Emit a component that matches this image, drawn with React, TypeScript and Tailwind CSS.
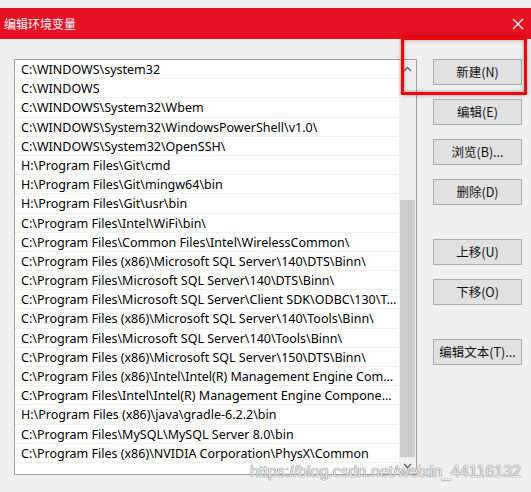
import React from 'react';

const paths = [
  'C:\\WINDOWS\\system32',
  'C:\\WINDOWS',
  'C:\\WINDOWS\\System32\\Wbem',
  'C:\\WINDOWS\\System32\\WindowsPowerShell\\v1.0\\',
  'C:\\WINDOWS\\System32\\OpenSSH\\',
  'H:\\Program Files\\Git\\cmd',
  'H:\\Program Files\\Git\\mingw64\\bin',
  'H:\\Program Files\\Git\\usr\\bin',
  'C:\\Program Files\\Intel\\WiFi\\bin\\',
  'C:\\Program Files\\Common Files\\Intel\\WirelessCommon\\',
  'C:\\Program Files (x86)\\Microsoft SQL Server\\140\\DTS\\Binn\\',
  'C:\\Program Files\\Microsoft SQL Server\\140\\DTS\\Binn\\',
  'C:\\Program Files\\Microsoft SQL Server\\Client SDK\\ODBC\\130\\Tools\\Binn\\',
  'C:\\Program Files (x86)\\Microsoft SQL Server\\140\\Tools\\Binn\\',
  'C:\\Program Files\\Microsoft SQL Server\\140\\Tools\\Binn\\',
  'C:\\Program Files (x86)\\Microsoft SQL Server\\150\\DTS\\Binn\\',
  'C:\\Program Files (x86)\\Intel\\Intel(R) Management Engine Components\\DAL',
  'C:\\Program Files\\Intel\\Intel(R) Management Engine Components\\DAL',
  'H:\\Program Files (x86)\\java\\gradle-6.2.2\\bin',
  'C:\\Program Files\\MySQL\\MySQL Server 8.0\\bin',
  'C:\\Program Files (x86)\\NVIDIA Corporation\\PhysX\\Common',
];

const buttons = [
  { label: '新建(N)', gap: 'mt-0' },
  { label: '编辑(E)', gap: 'mt-[14px]' },
  { label: '浏览(B)...', gap: 'mt-[14px]' },
  { label: '删除(D)', gap: 'mt-[14px]' },
  { label: '上移(U)', gap: 'mt-[34px]' },
  { label: '下移(O)', gap: 'mt-[14px]' },
  { label: '编辑文本(T)...', gap: 'mt-[34px]' },
];

function Chevron({ up }: { up?: boolean }) {
  return (
    <svg width="9" height="6" viewBox="0 0 9 6" className={up ? '' : 'rotate-180'}>
      <path d="M1 5 L4.5 1.5 L8 5" fill="none" stroke="#606060" strokeWidth="1.3" />
    </svg>
  );
}

export default function App() {
  return (
    <div className="relative w-[531px] h-[492px] overflow-hidden bg-[#f0f0f0] font-['Noto_Sans','Noto_Sans_CJK_SC',sans-serif] text-black">
      <div className="h-[8px]" />
      {/* title bar */}
      <div className="h-[31px] bg-[#e81123] flex items-center justify-between pl-[4px] pr-[7px] text-white">
        <span className="text-[12px] font-['Noto_Sans_CJK_SC',sans-serif]">编辑环境变量</span>
        <svg width="12" height="12" viewBox="0 0 12 12">
          <path d="M1 1 L11 11 M11 1 L1 11" stroke="white" strokeWidth="1.2" />
        </svg>
      </div>

      <div className="flex pl-[14px] pt-[20px]">
        {/* list */}
        <div className="w-[403px] h-[416px] border border-[#a0a0a0] bg-white flex">
          <div className="flex-1 min-w-0 flex flex-col">
            {paths.map((p) => (
              <div
                key={p}
                className="h-[19.2px] shrink-0 border-b border-[#f0f0f0] pl-[6px] pr-[1px] pt-[1px] text-[12.5px] leading-[18px] whitespace-nowrap overflow-hidden text-ellipsis"
              >
                {p}
              </div>
            ))}
          </div>
          <div className="w-[17px] bg-[#f0f0f0] flex flex-col">
            <div className="h-[17px] flex items-center justify-center">
              <Chevron up />
            </div>
            <div className="flex-1 flex flex-col justify-end px-[1px]">
              <div className="h-[257px] bg-[#cdcdcd]" />
            </div>
            <div className="h-[17px] flex items-center justify-center">
              <Chevron />
            </div>
          </div>
        </div>

        {/* buttons */}
        <div className="ml-[16px] flex flex-col">
          {buttons.map((b) => (
            <div
              key={b.label}
              className={`${b.gap} w-[89px] h-[26px] bg-[#e1e1e1] border border-[#adadad] flex items-center justify-center text-[12.5px] text-[#111] font-['Noto_Sans_CJK_SC',sans-serif]`}
            >
              {b.label}
            </div>
          ))}
        </div>
      </div>

      {/* red annotation box */}
      <div className="absolute left-[401px] top-[37px] w-[126px] h-[58px] border-[3px] border-[#ff0000] shadow-[0_0_4px_rgba(0,0,0,0.35),inset_0_0_4px_rgba(0,0,0,0.35)]" />

      {/* watermark */}
      <div className="absolute left-[250px] top-[460px] text-[16px] font-['Liberation_Sans',sans-serif] text-[#ececec] [text-shadow:0_0_1px_#707070,0_0_1px_#707070] whitespace-nowrap">
        https://blog.csdn.net/weixin_44116132
      </div>
    </div>
  );
}
